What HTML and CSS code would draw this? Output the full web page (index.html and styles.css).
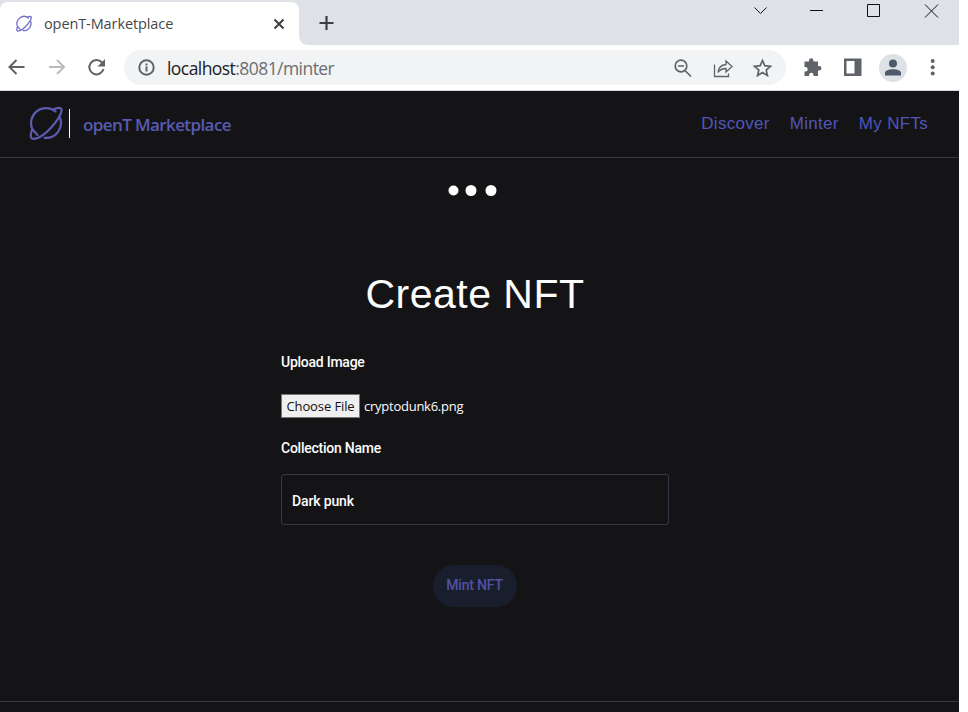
FILE: index.html
```html
<!DOCTYPE html>
<html lang="en">
<head>
<meta charset="utf-8">
<title>openT-Marketplace</title>
<link rel="stylesheet" href="styles.css">
</head>
<body>
<div class="window">
  <div class="tabbar">
    <div class="tab">
      <svg class="favicon" width="16" height="17" viewBox="0 0 34 34"><g class="planet"><path d="M26.600 5.500A15 15 0 0 0 3.400 23.300M31.100 11.900A15 15 0 0 1 15.700 31.900M24 3.500C29 1 33 1 32.500 5C31 13 16 31 6 32.700Q0 34 2.500 25.500L3.400 23.300L8.500 29"/></g></svg>
      <span class="tab-title">openT-Marketplace</span>
      <svg class="tab-close" width="12" height="12" viewBox="0 0 12 12"><path d="M1.5 1.5l9 9M10.500 1.500l-9 9"/></svg>
    </div>
    <svg class="corner" width="10" height="10" viewBox="0 0 10 10"><path d="M0 0Q0 10 10 10H0Z" fill="#fff"/></svg>
    <svg class="newtab" width="16" height="16" viewBox="0 0 16 16"><path d="M8.500 1v14M1.500 8h14"/></svg>
    <svg class="controls" width="190" height="20" viewBox="750 0 190 20"><path d="M754.500 7.500l6 6 6-6M810 10.500h13M867.500 4.500h12v12h-12zM925 4.500l13 13M938 4.500l-13 13"/></svg>
  </div>
  <div class="toolbar">
    <svg class="nav-icons" width="116" height="46" viewBox="0 45 116 46"><path class="line" d="M24.500 67H9.500M16.500 60l-7 7 7 7"/><path class="line pale" d="M49 67h15M57 60l7 7-7 7"/><path class="line" d="M102 62.500A7.200 7.200 0 1 0 103.500 69"/><path fill="#5f6368" d="M105 59v7.500h-7.500z"/></svg>
    <div class="address">
      <svg class="info" width="18" height="18" viewBox="0 0 18 18"><circle cx="8.500" cy="8.500" r="7.200"/><path d="M8.500 7.500v5M8.500 4.500v2"/></svg>
      <span class="url"><b>localhost</b>:8081/minter</span>
      <svg class="address-icons" width="120" height="34" viewBox="666 50 120 34"><g class="line thin"><circle cx="681" cy="65" r="5.800"/><path d="M678 65h6M685 69.500l6 6"/></g><g class="line share"><path d="M714.500 63.500v12h14v-3M718 71.500c.5-5.500 3-7.500 8-8v-3.500l6 5.500-6 5.500V67.500c-4 0-6 1-8 4z"/></g><path class="line thin" d="M762.500 59.500l2.300 5.200 5.600.6-4.200 3.700 1.200 5.500-4.900-2.900-4.900 2.900 1.200-5.500-4.200-3.700 5.600-.6z"/></svg>
    </div>
    <svg class="actions" width="173" height="46" viewBox="786 45 173 46"><path fill="#5f6368" d="M804.500 61.500h4.500v-1a2.200 2.200 0 0 1 4.400 0v1h4.600v4.500h1.200a2.200 2.200 0 0 1 0 4.400h-1.200v5.600h-4.500v-1a2.200 2.200 0 0 0-4.400 0v1H804.500v-4.500h1a2.200 2.200 0 0 0 0-4.400h-1z"/><path fill="#5f6368" fill-rule="evenodd" d="M844 58.500h17.500v17.500H844zM846.500 61v12.500h8V61z"/><circle cx="893" cy="68" r="14" fill="#dee1e6"/><circle cx="893" cy="63.500" r="4" fill="#4e5a6b"/><path fill="#4e5a6b" d="M885 75.500v-2.500c0-5 16-5 16 0v2.500z"/><g fill="#5f6368"><circle cx="932.700" cy="61" r="2"/><circle cx="932.700" cy="67.300" r="2"/><circle cx="932.700" cy="73.600" r="2"/></g></svg>
  </div>
  <div class="page">
    <header class="header">
      <svg class="logo" width="34" height="34" viewBox="0 0 34 34"><g class="planet"><path d="M26.600 5.500A15 15 0 0 0 3.400 23.300M31.100 11.900A15 15 0 0 1 15.700 31.900M24 3.500C29 1 33 1 32.500 5C31 13 16 31 6 32.700Q0 34 2.500 25.500L3.400 23.300L8.500 29"/></g></svg>
      <span class="divider"></span>
      <span class="brand">openT Marketplace</span>
      <nav class="menu"><a>Discover</a><a>Minter</a><a>My NFTs</a></nav>
    </header>
    <main class="main">
      <svg class="dots" width="50" height="12" viewBox="0 0 50 12"><g fill="#fff"><circle cx="5.500" cy="5.500" r="5"/><circle cx="23" cy="5.500" r="5.500"/><circle cx="43" cy="5.500" r="5.500"/></g></svg>
      <h1 class="title">Create NFT</h1>
      <div class="form">
        <label class="label">Upload Image</label>
        <div class="file"><span class="choose"><span>Choose File</span></span><span class="filename">cryptodunk6.png</span></div>
        <label class="label second">Collection Name</label>
        <div class="field"><span>Dark punk</span></div>
      </div>
      <div class="mint"><span>Mint NFT</span></div>
    </main>
    <footer class="footer"></footer>
  </div>
</div>
</body>
</html>
```
FILE: styles.css
```css
* { box-sizing: border-box; }
body { margin: 0; background: #fff; overflow: hidden; font-family: "Liberation Sans", sans-serif; }
svg { display: block; flex: none; }
span, a, label, h1 { white-space: nowrap; }
.window { width: 959px; height: 712px; display: flex; flex-direction: column; }
.tabbar { height: 45px; flex: none; background: #dee1e6; display: flex; align-items: flex-end; }
.tab { width: 299px; height: 43px; background: #fff; border-radius: 8px 8px 0 0; display: flex; align-items: center; padding: 0 14px 0 16px; }
.tab-title { font: 14.5px "Open Sans", sans-serif; letter-spacing: -.1px; color: #45474a; margin-left: 12px; flex: 1; }
.tab-close { fill: none; stroke: #3c4043; stroke-width: 2; }
.newtab { margin: 0 0 14px 9px; fill: none; stroke: #3c4043; stroke-width: 2.2; }
.controls { margin-left: auto; margin-right: 19px; align-self: flex-start; fill: none; stroke: #111; }
.toolbar { height: 46px; flex: none; background: #fff; border-bottom: 1px solid #d5d8db; display: flex; }
.line { fill: none; stroke: #5f6368; stroke-width: 2; }
.pale { stroke: #babcbe; }
.thin { stroke-width: 1.7; }
.share { stroke-width: 1.3; }
.address { margin: 5px 0 0 8px; width: 662px; height: 35px; background: #f1f3f4; border-radius: 18px; display: flex; align-items: center; padding-left: 14px; }
.info { fill: none; stroke: #5f6368; stroke-width: 2; }
.url { font: 17.5px/24px "Open Sans", sans-serif; letter-spacing: -.56px; color: #6b6e72; margin-left: 11px; }
.url b { font-weight: 400; color: #202124; }
.address-icons { margin-left: auto; }
.page { flex: 1; background: #141416; display: flex; flex-direction: column; }
.header { height: 67px; border-bottom: 1px solid #353945; display: flex; align-items: center; padding: 0 31px 2px 29px; }
.planet { fill: none; stroke: #5c5bb0; stroke-width: 2.2; stroke-linejoin: round; stroke-linecap: round; }
.favicon .planet { stroke: #7171ca; stroke-width: 2.8; }
.divider { width: 1px; height: 29px; background: #fff; margin-left: 6px; }
.brand { font: 600 17px "Open Sans", sans-serif; letter-spacing: -.6px; color: #575bb2; margin-left: 13px; padding-top: 3px; }
.menu { margin-left: auto; padding-top: 2px; display: flex; gap: 20px; font-size: 17px; letter-spacing: .3px; color: #5156ba; }
.main { flex: 1; display: flex; flex-direction: column; align-items: center; padding-right: 10px; }
.dots { margin: 27px 0 0 -4px; }
.title { margin: 73px 0 0 1px; font-size: 41px; font-weight: 400; line-height: 48px; letter-spacing: .5px; color: #fcfcfd; }
.form { width: 388px; margin-left: 1px; display: flex; flex-direction: column; }
.label { font: 500 14px/16px Roboto, sans-serif; color: #fcfcfd; margin-top: 36px; letter-spacing: -.25px; }
.second { margin-top: 23px; }
.file { display: flex; align-items: center; margin-top: 24px; height: 24px; font: 13px "Open Sans", sans-serif; color: #fcfcfd; }
.choose { width: 79px; height: 24px; border: 1px solid #767676; background: #efefef; color: #111; display: flex; align-items: center; justify-content: center; letter-spacing: -.1px; }
.filename { margin-left: 4px; letter-spacing: -.25px; }
.second { margin-top: 22px; }
.field { height: 51px; border: 1px solid #353945; border-radius: 3px; margin-top: 18px; padding: 2px 10px 0; display: flex; align-items: center; font: 500 14px Roboto, sans-serif; letter-spacing: -.15px; color: #fcfcfd; }
.mint { width: 84px; height: 42px; margin-top: 40px; padding-bottom: 2px; border-radius: 21px; background: #191e2d; display: flex; align-items: center; justify-content: center; font: 500 14px Roboto, sans-serif; letter-spacing: -.2px; color: #5252a2; }
.footer { height: 11px; border-top: 1px solid #353945; }
```
